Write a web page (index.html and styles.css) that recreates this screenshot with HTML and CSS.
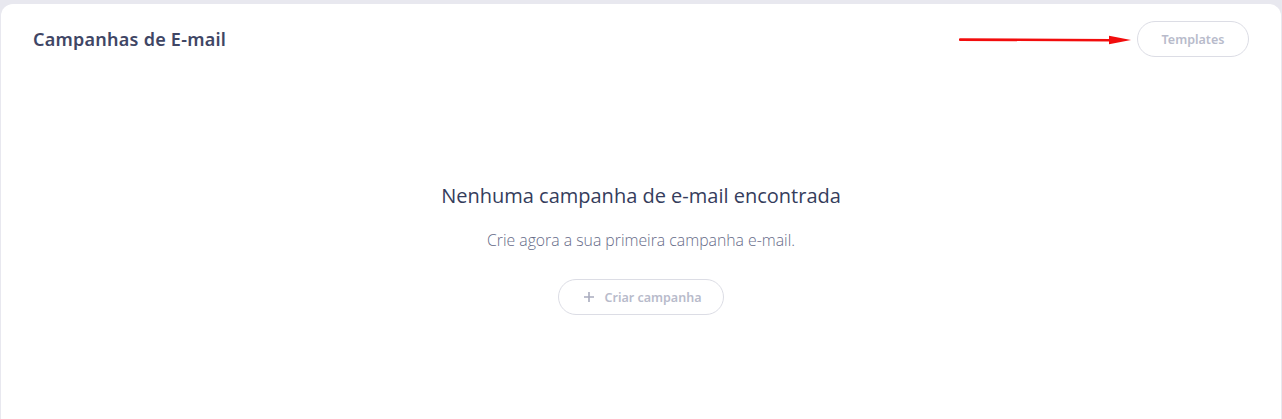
FILE: index.html
```html
<!DOCTYPE html>
<html lang="pt">
<head>
<meta charset="utf-8">
<title>Campanhas de E-mail</title>
<link rel="stylesheet" href="styles.css">
</head>
<body>
<div class="card">
  <div class="card-header">
    <h1 class="card-title">Campanhas de E-mail</h1>
    <div class="header-actions">
      <svg class="arrow" width="174" height="10" viewBox="0 0 174 10" aria-hidden="true">
        <path d="M1 4.6 L152 5.2" stroke="#f20d0d" stroke-width="2.6" stroke-linecap="round" fill="none"/>
        <path d="M150 0.8 L172 5 L150 9.2 Z" fill="#f20d0d"/>
      </svg>
      <button class="btn-outline btn-templates">Templates</button>
    </div>
  </div>
  <div class="empty-state">
    <h2 class="empty-title">Nenhuma campanha de e-mail encontrada</h2>
    <p class="empty-text">Crie agora a sua primeira campanha e-mail.</p>
    <button class="btn-outline btn-create">
      <svg class="plus" width="12" height="12" viewBox="0 0 12 12" aria-hidden="true">
        <path d="M6 1 V11 M1 6 H11" stroke="#a9acbe" stroke-width="1.6" fill="none"/>
      </svg>
      <span>Criar campanha</span>
    </button>
  </div>
</div>
</body>
</html>
```
FILE: styles.css
```css
html, body {
  margin: 0;
  padding: 0;
}
body {
  background: #e8e8ef;
  height: 419px;
  overflow: hidden;
  padding: 4px 1px 0 1px;
  box-sizing: border-box;
}
.card {
  background: #ffffff;
  border-radius: 12px 12px 0 0;
  height: 430px;
  box-sizing: border-box;
  padding: 17px 32px 0 32px;
}
.card-header {
  display: flex;
  align-items: center;
  justify-content: space-between;
  height: 36px;
}
.card-title {
  margin: 0;
  font-family: "Noto Sans", sans-serif;
  font-weight: 600;
  font-size: 18px;
  color: #3f4665;
  letter-spacing: 0.25px;
}
.header-actions {
  display: flex;
  align-items: center;
  gap: 4px;
}
.arrow {
  display: block;
  margin-top: 1px;
}
.btn-outline {
  background: #fff;
  border: 1.5px solid #dcdde5;
  border-radius: 20px;
  font-family: "Noto Sans", sans-serif;
  font-weight: 600;
  color: #b8bbcb;
  cursor: pointer;
  box-sizing: border-box;
}
.btn-templates {
  width: 112px;
  height: 36px;
  font-size: 12.5px;
}
.empty-state {
  display: flex;
  flex-direction: column;
  align-items: center;
  padding-top: 125px;
}
.empty-title {
  margin: 0;
  font-family: "Open Sans", sans-serif;
  font-weight: 400;
  font-size: 20px;
  line-height: 28px;
  color: #353d5c;
}
.empty-text {
  margin: 20px 0 0 0;
  font-family: "Open Sans", sans-serif;
  font-weight: 300;
  font-size: 15.8px;
  line-height: 20px;
  color: #666b88;
}
.btn-create {
  margin-top: 29px;
  width: 166px;
  height: 36px;
  font-size: 12.5px;
  display: flex;
  align-items: center;
  justify-content: center;
  gap: 10px;
  padding: 0 0 0 2px;
}
.plus {
  display: block;
}
```
